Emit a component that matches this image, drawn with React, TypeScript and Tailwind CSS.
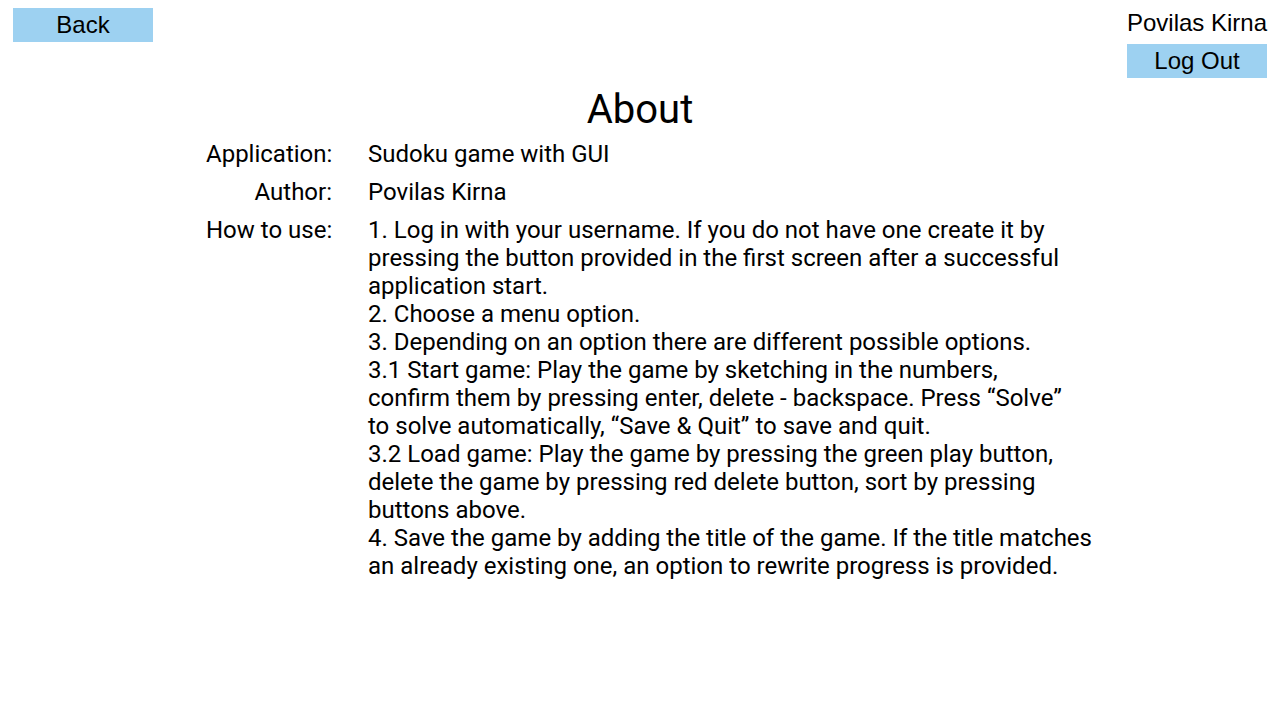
import React from "react";

const rows: { label: string; lines: string[] }[] = [
  { label: "Application:", lines: ["Sudoku game with GUI"] },
  { label: "Author:", lines: ["Povilas Kirna"] },
  {
    label: "How to use:",
    lines: [
      "1. Log in with your username. If you do not have one create it by",
      "pressing the button provided in the first screen after a successful",
      "application start.",
      "2. Choose a menu option.",
      "3. Depending on an option there are different possible options.",
      "3.1 Start game: Play the game by sketching in the numbers,",
      "confirm them by pressing enter, delete - backspace. Press \u201cSolve\u201d",
      "to solve automatically, \u201cSave & Quit\u201d to save and quit.",
      "3.2 Load game: Play the game by pressing the green play button,",
      "delete the game by pressing red delete button, sort by pressing",
      "buttons above.",
      "4. Save the game by adding the title of the game. If the title matches",
      "an already existing one, an option to rewrite progress is provided.",
    ],
  },
];

export default function App() {
  return (
    <div className="w-[1280px] h-[720px] bg-white text-black overflow-hidden font-['Roboto',sans-serif]">
      {/* Top bar */}
      <div className="flex justify-between items-start pt-2 px-[13px]">
        <button className="w-[140px] h-[34px] bg-[#9dd1f1] text-[24px] leading-[34px] font-['Liberation_Sans',sans-serif]">
          Back
        </button>
        <div className="flex flex-col items-end">
          <div className="h-[30px] text-[24px] leading-[30px] font-['Liberation_Sans',sans-serif]">
            Povilas Kirna
          </div>
          <button className="mt-[6px] w-[140px] h-[34px] bg-[#9dd1f1] text-[24px] leading-[34px] font-['Liberation_Sans',sans-serif]">
            Log Out
          </button>
        </div>
      </div>

      {/* Title */}
      <h1 className="text-center text-[40px] leading-[48px] mt-[8px] mb-[6px]">About</h1>

      {/* Info table */}
      <div className="flex flex-col gap-[10px] pl-[206px] text-[24px] leading-[28px]">
        {rows.map((r) => (
          <div key={r.label} className="flex gap-[36px]">
            <div className="w-[126px] text-right shrink-0 whitespace-nowrap">{r.label}</div>
            <div className="whitespace-nowrap">
              {r.lines.map((l, i) => (
                <div key={i}>{l}</div>
              ))}
            </div>
          </div>
        ))}
      </div>
    </div>
  );
}
